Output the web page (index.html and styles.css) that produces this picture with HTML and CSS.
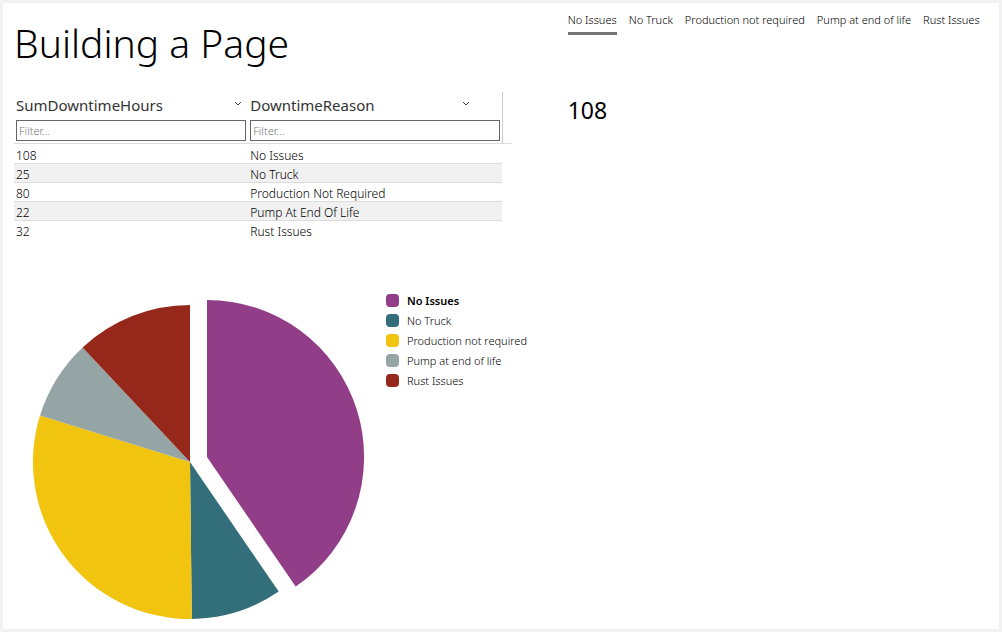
FILE: index.html
```
<!DOCTYPE html>
<html lang="en">
<head>
    <meta charset="UTF-8">
    <meta name="viewport" content="width=device-width, initial-scale=1.0">
    <title>Building a Page</title>
    <link rel="stylesheet" href="styles.css">
</head>
<body>
    <main class="page">
        <section class="left">
            <h1 class="title">Building a Page</h1>

            <table class="grid">
                <colgroup>
                    <col class="col_hours">
                    <col class="col_reason">
                    <col class="col_end">
                </colgroup>
                <thead>
                    <tr>
                        <th>
                            <div class="head">
                                <label for="filter_hours">SumDowntimeHours</label>
                                <button type="button" class="menu" aria-label="Column menu">
                                    <svg width="8" height="5" viewBox="0 0 8 5"><path d="M1 1l3 3 3-3"/></svg>
                                </button>
                            </div>
                            <input type="text" id="filter_hours" class="filter" placeholder="Filter...">
                        </th>
                        <th>
                            <div class="head head_last">
                                <label for="filter_reason">DowntimeReason</label>
                                <button type="button" class="menu" aria-label="Column menu">
                                    <svg width="8" height="5" viewBox="0 0 8 5"><path d="M1 1l3 3 3-3"/></svg>
                                </button>
                            </div>
                            <input type="text" id="filter_reason" class="filter" placeholder="Filter...">
                        </th>
                        <td class="end"></td>
                    </tr>
                </thead>
                <tbody>
                    <tr><td>108</td><td>No Issues</td></tr>
                    <tr><td>25</td><td>No Truck</td></tr>
                    <tr><td>80</td><td>Production Not Required</td></tr>
                    <tr><td>22</td><td>Pump At End Of Life</td></tr>
                    <tr><td>32</td><td>Rust Issues</td></tr>
                </tbody>
            </table>

            <div class="chart">
                <svg class="pie" width="333" height="321" viewBox="0 0 333 321" role="img" aria-label="Downtime by reason">
                    <path class="issues" d="M175 158V1A157 157 0 0 1 263.7 287.6Z"/>
                    <path class="truck" d="M158 163L246.7 292.6A157 157 0 0 1 159.8 320Z"/>
                    <path class="production" d="M158 163L159.8 320A157 157 0 0 1 8 116.6Z"/>
                    <path class="pump" d="M158 163L8 116.6A157 157 0 0 1 50.6 48.5Z"/>
                    <path class="rust" d="M158 163L50.6 48.5A157 157 0 0 1 158 6Z"/>
                </svg>
                <ul class="legend">
                    <li class="selected"><span class="key issues"></span>No Issues</li>
                    <li><span class="key truck"></span>No Truck</li>
                    <li><span class="key production"></span>Production not required</li>
                    <li><span class="key pump"></span>Pump at end of life</li>
                    <li><span class="key rust"></span>Rust Issues</li>
                </ul>
            </div>
        </section>

        <section class="right">
            <div class="tabs" role="tablist">
                <button type="button" role="tab" class="tab active" aria-selected="true">No Issues</button>
                <button type="button" role="tab" class="tab">No Truck</button>
                <button type="button" role="tab" class="tab">Production not required</button>
                <button type="button" role="tab" class="tab">Pump at end of life</button>
                <button type="button" role="tab" class="tab">Rust Issues</button>
            </div>
            <div class="total">108</div>
        </section>
    </main>
    <script>
        const tabs = document.querySelectorAll('.tab');
        const totals = [108, 25, 80, 22, 32];

        tabs.forEach((tab, i) => {
            tab.addEventListener('click', () => {
                tabs.forEach(t => {
                    t.classList.toggle('active', t === tab);
                    t.setAttribute('aria-selected', t === tab);
                });
                document.querySelector('.total').textContent = totals[i];
            });
        });
    </script>
</body>
</html>
```
FILE: styles.css
```
* {
    margin: 0;
    padding: 0;
    box-sizing: border-box;
}

body {
    font-family: 'Segoe UI', 'Noto Sans', 'Open Sans', sans-serif;
    font-size: 11px;
    font-weight: 300;
    color: #000;
    background: #fff;
}

button, input {
    font: inherit;
    color: inherit;
}

button {
    background: none;
    border: none;
    cursor: pointer;
}

.page {
    display: grid;
    grid-template-columns: minmax(0, 23fr) minmax(0, 17fr);
    min-height: 100vh;
    padding: 8px 22px 8px 11px;
    border: 3px solid #f2f2f2;
}

.title {
    font-size: 39px;
    font-weight: 300;
    line-height: 64px;
    color: #000;
}

.grid {
    width: 90%;
    margin-top: 17px;
    table-layout: fixed;
    border-collapse: separate;
    border-spacing: 0;
}

.col_hours {
    width: 47%;
}

.col_reason {
    width: 51%;
}

.col_end {
    width: 2%;
}

.grid th {
    padding: 0 2px 2px;
    font-weight: 300;
    text-align: left;
    border-bottom: 1px solid #dcdcdc;
}

.head {
    display: flex;
    justify-content: space-between;
    align-items: center;
    height: 28px;
    padding-bottom: 2px;
    font-size: 15px;
    font-weight: 400;
    color: #333;
}

.head_last {
    padding-right: 26px;
}

.menu {
    display: flex;
    padding: 0 4px 4px;
}

.menu svg {
    fill: none;
    stroke: #444;
}

.filter {
    display: block;
    width: 100%;
    height: 21px;
    padding: 0 2px;
    background: #fff;
    border: 1px solid #666;
    border-radius: 0;
}

.filter::placeholder {
    color: #777;
}

.end {
    border-left: 1px solid #ccc;
    border-bottom: 1px solid #dcdcdc;
}

.grid tbody td {
    height: 19px;
    padding: 3px 2px 0;
    font-size: 12px;
    line-height: 15px;
    vertical-align: top;
    border-bottom: 1px solid #dcdcdc;
}

.grid tbody tr:first-child td {
    height: 20px;
    padding-top: 4px;
}

.grid tbody tr:nth-child(even) td {
    background: #f1f1f1;
}

.grid tbody tr:last-child td {
    border-bottom: none;
}

.chart {
    display: flex;
    align-items: flex-start;
    gap: 21px;
    margin-top: 59px;
    padding-left: 18px;
}

.pie {
    flex: none;
}

.legend {
    list-style: none;
    margin-top: -9px;
}

.legend li {
    display: flex;
    align-items: center;
    gap: 8px;
    height: 20px;
    white-space: nowrap;
}

.legend .selected {
    font-weight: 600;
    color: #000;
}

.key {
    width: 13px;
    height: 13px;
    border-radius: 4px;
}

.issues {
    fill: #913d88;
    background: #913d88;
}

.truck {
    fill: #336e7b;
    background: #336e7b;
}

.production {
    fill: #f1c40f;
    background: #f1c40f;
}

.pump {
    fill: #95a5a6;
    background: #95a5a6;
}

.rust {
    fill: #96281b;
    background: #96281b;
}

.tabs {
    display: flex;
    gap: 12px;
}

.tab {
    height: 24px;
    padding-bottom: 5px;
    white-space: nowrap;
    border-bottom: 3px solid transparent;
}

.active {
    border-bottom-color: #737373;
}

.total {
    margin-top: 59px;
    font-size: 23px;
    font-weight: 400;
    line-height: 32px;
    color: #000;
}
```
